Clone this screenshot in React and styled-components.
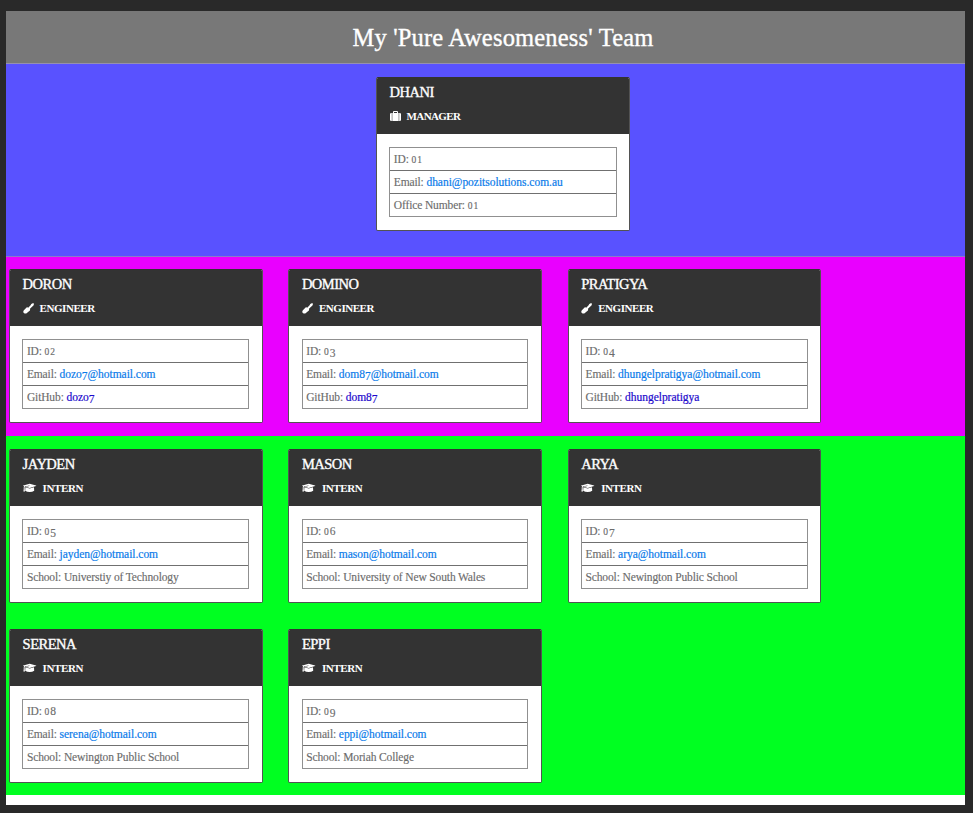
import React from "react";
import styled, { createGlobalStyle } from "styled-components";

const GlobalStyle = createGlobalStyle`
  * { box-sizing: border-box; }
  body {
    margin: 0;
    background: #292929;
    font-family: Georgia, "Liberation Serif", serif;
  }
`;

const Page = styled.main`
  width: 959px;
  height: 794px;
  margin: 11px 8px 8px 6px;
  background: #fff;
  overflow: hidden;
`;

const Banner = styled.header`
  height: 53px;
  display: flex;
  justify-content: center;
  padding: 12px 0 0 35px;
  background: #787878;
  border-bottom: 1px solid #9590b0;
`;

const Title = styled.h1`
  margin: 0;
  font-size: 24.5px;
  line-height: 30px;
  font-weight: 400;
  letter-spacing: 0.18px;
  color: #fff;
  white-space: nowrap;
  -webkit-text-stroke: 0.35px #fff;
`;

const Band = styled.section`
  height: ${(p) => p.$height}px;
  display: grid;
  grid-template-columns: repeat(3, 253.5px);
  grid-auto-rows: 154px;
  column-gap: 25.8px;
  row-gap: 25.6px;
  align-content: start;
  padding: ${(p) => p.$top || 13}px 0 0 3.1px;
  background: ${(p) => p.$color};
`;

const LeadBand = styled(Band)`
  grid-template-columns: 254px;
  padding-left: 370px;
  border-bottom: 1px solid #8c78c8;
`;

const Card = styled.article`
  display: flex;
  flex-direction: column;
  background: #fff;
  border: 1px solid #333;
  border-color: #333 rgba(40, 40, 40, 0.8) rgba(40, 40, 40, 0.8);
  border-radius: 2px;
  overflow: hidden;
`;

const CardHead = styled.div`
  height: 56px;
  padding: 4px 12.5px 0;
  background: #333;
  color: #fff;
`;

const Name = styled.h2`
  margin: 0;
  font-size: 14.5px;
  line-height: 20px;
  font-weight: 400;
  letter-spacing: -0.5px;
  -webkit-text-stroke: 0.35px #fff;
`;

const Role = styled.div`
  display: flex;
  align-items: center;
  gap: 6px;
  height: 16px;
  margin-top: 6px;
  font-size: 11px;
  font-weight: 700;
  letter-spacing: ${(p) => p.$spacing}px;
`;

const Icon = styled.svg`
  display: block;
  flex: none;
  fill: #fff;
`;

const Details = styled.ul`
  list-style: none;
  margin: 13px 12.5px 0 12.3px;
  padding: 0;
  border: 1px solid #909090;
`;

const Detail = styled.li`
  height: 23px;
  padding: 0 3px 0 3.5px;
  line-height: 22px;
  font-size: 11.5px;
  letter-spacing: -0.13px;
  color: #6c6c6c;
  white-space: nowrap;
  border-bottom: 1px solid #707070;
  -webkit-text-stroke: 0.15px currentColor;
  &:last-child { border-bottom: 0; height: 22px; }
`;

const Link = styled.a`
  color: ${(p) => (p.$visited ? "#1c08cc" : "#0a7bea")};
  letter-spacing: -0.03px;
  text-decoration: none;
  -webkit-text-stroke: 0.2px currentColor;
`;

const Figure = styled.span`
  font-size: ${(p) => (p.$low ? "9.5px" : "11.5px")};
  line-height: 0;
  letter-spacing: ${(p) => (p.$low ? 1 : 0)}px;
  vertical-align: ${(p) => (p.$drop ? "-2px" : "baseline")};
`;

/* Old-style numerals: 0-2 sit at x-height, 3-5, 7 and 9 hang below the line. */
function Text({ children }) {
  return children.split(/(\d)/).map((part, i) =>
    /^\d$/.test(part) ? (
      <Figure key={i} $low={"012".includes(part)} $drop={"34579".includes(part)}>
        {part}
      </Figure>
    ) : (
      part
    )
  );
}

const roles = {
  Manager: {
    label: "MANAGER", field: "Office Number", spacing: -0.6,
    icon: (
      <Icon width="11" height="10" viewBox="0 0 11 10">
        <path d="M0 3.2Q0 2 1.2 2H1.8v8H1.2Q0 10 0 8.8ZM2.3 2H3V1Q3 0 4 0h3q1 0 1 1v1h.7v8H2.3ZM4 1v1h3V1ZM9.2 2h.6Q11 2 11 3.2v5.6Q11 10 9.8 10h-.6Z" fillRule="evenodd" />
      </Icon>
    ),
  },
  Engineer: {
    label: "ENGINEER", field: "GitHub", spacing: -0.45,
    icon: (
      <Icon width="11" height="11" viewBox="0 0 11 11">
        <path d="M8.3.9 10.2.1l.8.8-.7 1.9-1.3.9-2.2 2.2.3.5c.2.4.1.8-.2 1.1L3.9 10c-.8.8-2.1.8-3 0-.8-.8-.8-2 0-2.8L3.6 4.6c.4-.3.8-.3 1.1-.1l.5.3L7.6 2.2Z" />
      </Icon>
    ),
  },
  Intern: {
    label: "INTERN", field: "School", spacing: -0.4,
    icon: (
      <Icon width="14" height="10" viewBox="0 0 14 10">
        <path d="M6.7.7 13 2.4q.5.3 0 .7L6.7 5 2.6 3.8l3.9-.8-.1-.5L2 3.4Q1.5 3.8 1.5 4.6q.5.4.1.9L2 8.6H.4L.8 5.5Q.4 5 .8 4.5L1 3.3.3 3q-.5-.3 0-.6ZM2.4 4.3 6.7 5.6 11 4.3l.2 3.5Q9.4 9 6.7 9T2.2 7.8Z" />
      </Icon>
    ),
  },
};

const manager = { name: "DHANI", role: "Manager", id: "01", email: "dhani@pozitsolutions.com.au", extra: "01" };
const engineers = [
  { name: "DORON", role: "Engineer", id: "02", email: "dozo7@hotmail.com", extra: "dozo7" },
  { name: "DOMINO", role: "Engineer", id: "03", email: "dom87@hotmail.com", extra: "dom87" },
  { name: "PRATIGYA", role: "Engineer", id: "04", email: "dhungelpratigya@hotmail.com", extra: "dhungelpratigya" },
];
const interns = [
  { name: "JAYDEN", role: "Intern", id: "05", email: "jayden@hotmail.com", extra: "Universtiy of Technology" },
  { name: "MASON", role: "Intern", id: "06", email: "mason@hotmail.com", extra: "University of New South Wales" },
  { name: "ARYA", role: "Intern", id: "07", email: "arya@hotmail.com", extra: "Newington Public School" },
  { name: "SERENA", role: "Intern", id: "08", email: "serena@hotmail.com", extra: "Newington Public School" },
  { name: "EPPI", role: "Intern", id: "09", email: "eppi@hotmail.com", extra: "Moriah College" },
];

function MemberCard({ member }) {
  const role = roles[member.role];
  return (
    <Card>
      <CardHead>
        <Name>{member.name}</Name>
        <Role $spacing={role.spacing}>
          {role.icon}
          <span>{role.label}</span>
        </Role>
      </CardHead>
      <Details>
        <Detail>ID: <Text>{member.id}</Text></Detail>
        <Detail>
          Email: <Link href={`mailto:${member.email}`}><Text>{member.email}</Text></Link>
        </Detail>
        <Detail>
          {role.field}:{" "}
          {member.role === "Engineer" ? (
            <Link $visited href={`https://github.com/${member.extra}`}><Text>{member.extra}</Text></Link>
          ) : (
            <Text>{member.extra}</Text>
          )}
        </Detail>
      </Details>
    </Card>
  );
}

export default function App() {
  return (
    <>
      <GlobalStyle />
      <Page>
        <Banner><Title>My 'Pure Awesomeness' Team</Title></Banner>
        <LeadBand $height={193} $color="#5952ff"><MemberCard member={manager} /></LeadBand>
        <Band $height={179} $top={12.4} $color="#e900ff">
          {engineers.map((m) => <MemberCard key={m.id} member={m} />)}
        </Band>
        <Band $height={359} $color="#00ff21">
          {interns.map((m) => <MemberCard key={m.id} member={m} />)}
        </Band>
      </Page>
    </>
  );
}
